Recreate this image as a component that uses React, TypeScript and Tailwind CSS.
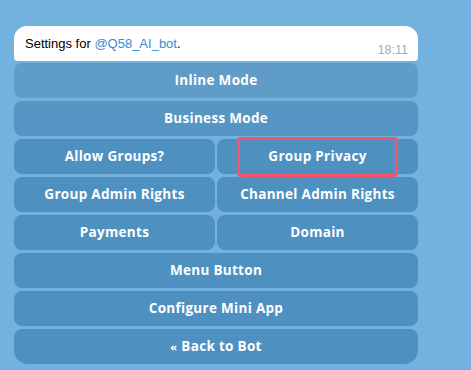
import React from 'react';

const Btn: React.FC<{ label: React.ReactNode; className?: string }> = ({ label, className = '' }) => (
  <div
    className={`h-[35px] flex items-center justify-center rounded-[8px] bg-[#4e91c1] text-white text-[13.5px] font-bold tracking-[0.3px] ${className}`}
  >
    {label}
  </div>
);

const App: React.FC = () => {
  return (
    <div className="w-[471px] h-[370px] bg-[#73b2df] overflow-hidden pt-[26px] pl-[14px] font-['Open_Sans',sans-serif]">
      <div className="w-[404px] flex flex-col">
        {/* message bubble */}
        <div className="h-[35px] bg-white rounded-t-[13px] rounded-b-[4px] flex items-start justify-between pl-[11px] pr-[10px]">
          <div className="pt-[8px] text-[13px] text-black font-['Liberation_Sans',sans-serif]">
            Settings for <span className="text-[#3a8bcc]">@Q58_AI_bot</span>.
          </div>
          <div className="pt-[15px] text-[12.5px] text-[#a3adb6] font-['Liberation_Sans',sans-serif]">18:11</div>
        </div>

        <div className="mt-[2px] flex flex-col gap-[3px]">
          <Btn label="Inline Mode" className="bg-[#5f9dc8]" />
          <Btn label="Business Mode" className="bg-[#5596c4]" />
          <div className="grid grid-cols-2 gap-[2px]">
            <Btn label="Allow Groups?" />
            <div className="relative">
              <Btn label="Group Privacy" />
              <div className="absolute left-[20px] top-[-2px] w-[161px] h-[40px] border-[3px] border-[#fa5268] rounded-[4px]" />
            </div>
          </div>
          <div className="grid grid-cols-2 gap-[2px]">
            <Btn label="Group Admin Rights" />
            <Btn label="Channel Admin Rights" />
          </div>
          <div className="grid grid-cols-2 gap-[2px]">
            <Btn label="Payments" />
            <Btn label="Domain" />
          </div>
          <Btn label="Menu Button" />
          <Btn label="Configure Mini App" />
          <Btn
            label={<span><span className="text-[11px] mr-[4px]">«</span>Back to Bot</span>}
            className="rounded-b-[14px]"
          />
        </div>
      </div>
    </div>
  );
};

export default App;
